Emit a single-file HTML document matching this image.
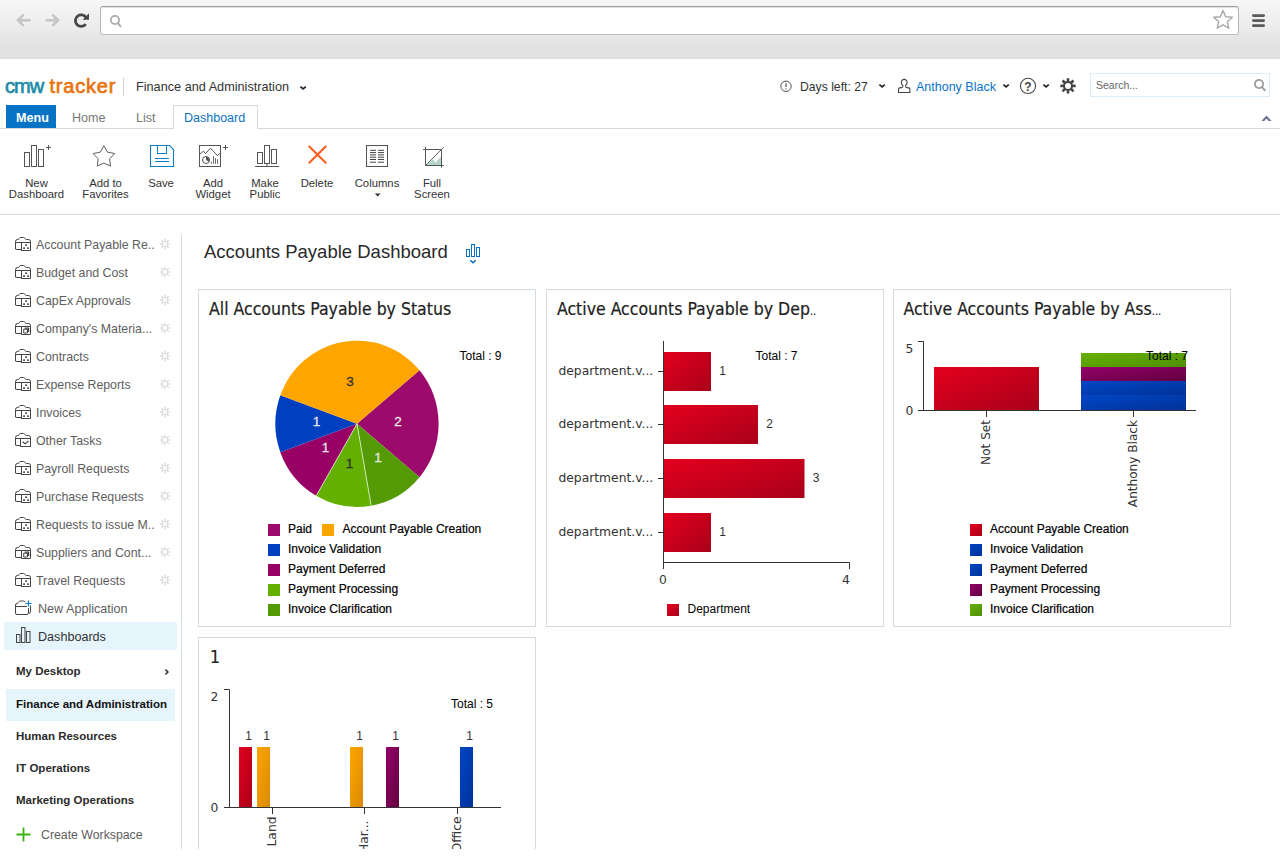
<!DOCTYPE html>
<html lang="en"><head><meta charset="utf-8"><title>Accounts Payable Dashboard</title>
<style>
*{box-sizing:border-box;margin:0;padding:0}
html,body{width:1280px;height:859px;background:#fff;overflow:hidden}
body{font-family:"Liberation Sans",sans-serif;color:#333;position:relative}
#page{position:absolute;left:0;top:0;width:1280px;height:849px;overflow:hidden;background:#fff}
.abs{position:absolute}
.t{position:absolute;white-space:nowrap;line-height:1}
svg{position:absolute;overflow:visible}
#chrome{position:absolute;left:0;top:0;width:1280px;height:59px;background:linear-gradient(#f7f7f7 0,#f1f1f1 14px,#ebebeb 30px,#e2e2e2 44px,#e2e2e2 57px,#dcdcdc 59px)}
#url{position:absolute;left:100px;top:6px;width:1139px;height:29px;background:#fff;border:1px solid;border-color:#a0a0a0 #b6b6b6 #bdbdbd #b6b6b6;border-radius:3px;box-shadow:inset 0 1px 1px rgba(0,0,0,.12)}
.hl{position:absolute;background:#d3dbe2;height:1px}
.tb{position:absolute;top:178px;font-size:11.3px;line-height:11px;text-align:center;color:#333;white-space:nowrap;transform:translateX(-50%)}
.sb{position:absolute;left:36px;font-size:12.35px;color:#5e5e5e;white-space:nowrap;line-height:16px}
.sbb{position:absolute;left:16px;font-size:11.5px;font-weight:bold;color:#2b2b2b;white-space:nowrap;line-height:16px}
.w{position:absolute;width:338px;height:338px;border:1px solid #d3dae0;background:#fff}
.wt{position:absolute;left:10px;top:7.5px;-webkit-text-stroke:.2px #222;font-family:"DejaVu Sans Condensed","DejaVu Sans","Liberation Sans",sans-serif;font-size:17.5px;line-height:22px;color:#222;white-space:nowrap}
.lg{position:absolute;font-size:12px;line-height:14px;color:#000;white-space:nowrap;-webkit-text-stroke:.2px #000}
.sw{position:absolute;width:12px;height:12px}
</style></head>
<body><div id="page">
<div id="chrome"><svg width="100" height="59" style="left:0;top:0" viewBox="0 0 100 59"><g stroke="#fafafa" stroke-width="5" fill="none" stroke-linecap="round" stroke-linejoin="round" opacity=".7"><path d="M29.500 20.300H19M23 15.300L17.700 20.300L23 25.300"/><path d="M46.500 20.300H57M53 15.300L58.300 20.300L53 25.300"/></g><g stroke="#c7c7c7" stroke-width="2.900" fill="none" stroke-linecap="round" stroke-linejoin="round"><path d="M29.500 20.300H19M23 15.300L17.700 20.300L23 25.300"/><path d="M46.500 20.300H57M53 15.300L58.300 20.300L53 25.300"/></g><g><path d="M86.220 17.700A5.800 5.800 0 1 0 85.770 24.170" stroke="#474747" stroke-width="2.800" fill="none"/><path d="M89 13.200V19.700H82.600z" fill="#474747"/></g></svg><div id="url"></div><svg width="20" height="20" style="left:108px;top:12px" viewBox="0 0 20 20"><circle cx="7" cy="8" r="4.100" fill="none" stroke="#ababab" stroke-width="1.800"/><path d="M10 11.100L12.400 14.200" stroke="#ababab" stroke-width="2" stroke-linecap="round"/></svg><svg width="24" height="24" style="left:1211px;top:8px" viewBox="0 0 24 24"><path d="M12 2.6l2.7 6.1 6.6.6-5 4.4 1.5 6.5L12 16.8l-5.8 3.4 1.5-6.5-5-4.4 6.6-.6z" fill="#fff" stroke="#a9a9a9" stroke-width="1.400" stroke-linejoin="round"/></svg><svg width="16" height="16" style="left:1251px;top:13px" viewBox="0 0 16 16"><g stroke="#5a5a5a" stroke-width="2.6" stroke-linecap="round"><path d="M2.3 2.6h10.4M2.3 7.6h10.4M2.3 12.6h10.4"/></g></svg></div>
<div class="t" style="left:5px;top:73.5px;font-size:20px;letter-spacing:-1px;color:#1b8aa6;line-height:24px;-webkit-text-stroke:.65px #1b8aa6">cmw</div><div class="t" style="left:49.5px;top:73.5px;font-size:20px;letter-spacing:.8px;color:#e8720c;line-height:24px;-webkit-text-stroke:.65px #e8720c">tracker</div><div class="abs" style="left:123px;top:78px;width:1px;height:18px;background:#d0d0d0"></div><div class="t" style="left:136px;top:79px;font-size:12.7px;line-height:16px;color:#333">Finance and Administration</div><svg width="8" height="6" style="left:298.8px;top:84.9px" viewBox="0 0 8 6"><path d="M1.400 1.700L4.100 3.900L6.800 1.700" fill="none" stroke="#222" stroke-width="1.700"/></svg><svg width="14" height="14" style="left:779px;top:79px" viewBox="0 0 14 14"><circle cx="7" cy="7.3" r="5.2" fill="none" stroke="#555" stroke-width="1"/><path d="M7 4.3v3.6" stroke="#555" stroke-width="1.2"/><circle cx="7" cy="9.9" r=".7" fill="#555"/></svg><div class="t" style="left:800px;top:79px;font-size:12.2px;line-height:16px;color:#333">Days left: 27</div><svg width="8" height="6" style="left:877.9px;top:82.8px" viewBox="0 0 8 6"><path d="M1.400 1.700L4.100 3.900L6.800 1.700" fill="none" stroke="#222" stroke-width="1.700"/></svg><svg width="16" height="16" style="left:896px;top:78px" viewBox="0 0 16 16"><path d="M8.200 1.400C6.400 1.400 5.300 2.700 5.300 4.400C5.300 5.600 5.900 6.600 6.800 7.400V8.600C6.800 9.200 6.300 9.500 5.600 9.600L3.600 9.900C2.900 10 2.500 10.500 2.500 11.200V14.500H13.900V11.200C13.900 10.500 13.500 10 12.800 9.900L10.800 9.600C10.100 9.500 9.600 9.200 9.600 8.600V7.400C10.500 6.600 11.100 5.600 11.100 4.400C11.100 2.700 10 1.400 8.200 1.400Z" fill="none" stroke="#444" stroke-width="1.100"/></svg><div class="t" style="left:916px;top:79px;font-size:12.5px;line-height:16px;color:#0a72c4">Anthony Black</div><svg width="8" height="6" style="left:1001.9px;top:82.8px" viewBox="0 0 8 6"><path d="M1.400 1.700L4.100 3.900L6.800 1.700" fill="none" stroke="#222" stroke-width="1.700"/></svg><svg width="20" height="20" style="left:1018px;top:76px" viewBox="0 0 20 20"><circle cx="10" cy="9.900" r="7.600" fill="none" stroke="#4a4a4a" stroke-width="1.100"/></svg><div class="t" style="left:1018px;top:79.500px;width:20px;text-align:center;font-size:12px;font-weight:bold;line-height:14px;color:#444">?</div><svg width="8" height="6" style="left:1041.9px;top:82.8px" viewBox="0 0 8 6"><path d="M1.400 1.700L4.100 3.900L6.800 1.700" fill="none" stroke="#222" stroke-width="1.700"/></svg><svg width="18" height="18" style="left:1059px;top:77px" viewBox="0 0 18 18"><circle cx="9" cy="8.9" r="4.0" fill="none" stroke="#444" stroke-width="2.0"/><line x1="13.30" y1="8.90" x2="16.70" y2="8.90" stroke="#444" stroke-width="2.6"/><line x1="12.04" y1="11.94" x2="14.44" y2="14.34" stroke="#444" stroke-width="2.6"/><line x1="9.00" y1="13.20" x2="9.00" y2="16.60" stroke="#444" stroke-width="2.6"/><line x1="5.96" y1="11.94" x2="3.56" y2="14.34" stroke="#444" stroke-width="2.6"/><line x1="4.70" y1="8.90" x2="1.30" y2="8.90" stroke="#444" stroke-width="2.6"/><line x1="5.96" y1="5.86" x2="3.56" y2="3.46" stroke="#444" stroke-width="2.6"/><line x1="9.00" y1="4.60" x2="9.00" y2="1.20" stroke="#444" stroke-width="2.6"/><line x1="12.04" y1="5.86" x2="14.44" y2="3.46" stroke="#444" stroke-width="2.6"/></svg><div class="abs" style="left:1090px;top:73px;width:180px;height:24px;border:1px solid #dcecf9;background:#fff"></div><div class="t" style="left:1096px;top:79px;font-size:10.5px;line-height:13px;color:#666">Search...</div><svg width="14" height="14" style="left:1253px;top:78px" viewBox="0 0 14 14"><circle cx="6" cy="6" r="4.100" fill="none" stroke="#9c9c9c" stroke-width="1.800"/><path d="M9 9.100L11.700 12.200" stroke="#9c9c9c" stroke-width="2" stroke-linecap="round"/></svg><div class="hl" style="left:0;top:128px;width:1280px"></div><div class="abs" style="left:6px;top:105px;width:50px;height:23px;background:#0673c5"></div><div class="t" style="left:16px;top:110px;font-size:12.6px;font-weight:bold;line-height:16px;color:#fff">Menu</div><div class="t" style="left:72px;top:110px;font-size:12.6px;line-height:16px;color:#777">Home</div><div class="t" style="left:136px;top:110px;font-size:12.6px;line-height:16px;color:#777">List</div><div class="abs" style="left:173px;top:105px;width:85px;height:24px;border:1px solid #d3dbe2;border-bottom:none;background:#fff"></div><div class="t" style="left:184px;top:110px;font-size:12.5px;line-height:16px;color:#0a72c4">Dashboard</div><svg width="12" height="8" style="left:1261px;top:115px" viewBox="0 0 12 8"><path d="M.400 6L5.500 .400L10.600 6H7.700L5.500 3.600L3.300 6Z" fill="#6f7197"/></svg>
<div class="hl" style="left:0;top:214px;width:1280px"></div>
<svg width="32" height="26" style="left:22px;top:143px" viewBox="0 0 32 26"><g fill="none" stroke="#555" stroke-width="1"><rect x="2.5" y="9.5" width="5" height="14"/><rect x="9.5" y="2.5" width="5" height="21"/><rect x="16.5" y="6.500" width="5" height="17"/><path d="M26.500 2v5M24 4.500h5"/></g></svg><div class="tb" style="left:36.5px">New<br>Dashboard</div><svg width="24" height="24" style="left:92px;top:144px" viewBox="0 0 24 24"><path d="M11.90 1.70L15.43 8.15L22.65 9.51L17.61 14.85L18.54 22.14L11.90 19.00L5.26 22.14L6.19 14.85L1.15 9.51L8.37 8.15z" fill="none" stroke="#606060" stroke-width="1" stroke-linejoin="miter"/></svg><div class="tb" style="left:105.5px">Add to<br>Favorites</div><svg width="26" height="24" style="left:149px;top:144px" viewBox="0 0 26 24"><g fill="none" stroke="#0c7fc6" stroke-width="1.100"><path d="M1.500 1.500h19l4 4v17h-23z"/><path d="M8.500 1.500v8h9v-8"/><path d="M6 14.500h14M6 17.500h14"/></g></svg><div class="tb" style="left:161px">Save</div><svg width="32" height="26" style="left:198px;top:143px" viewBox="0 0 32 26"><g fill="none" stroke="#555" stroke-width="1"><rect x="1.500" y="2.500" width="21" height="21"/><path d="M1.500 11.500L5.400 8.200L7.500 10.700L12.500 5.200L19.400 12.600L22.500 9.900" stroke-width="1"/><circle cx="8" cy="17" r="3.500" stroke-width="1"/><path d="M13.400 18.500V20.800M15.500 13.200V20.800M17.500 15.200V20.800M19.500 16.200V20.800" stroke-width=".900"/><path d="M27.500 2v5M25 4.500h5"/></g><path d="M8 17V13.500A3.500 3.500 0 0 1 11.030 18.750z" fill="#555"/></svg><div class="tb" style="left:213px">Add<br>Widget</div><svg width="28" height="26" style="left:253px;top:143px" viewBox="0 0 28 26"><g fill="none" stroke="#555" stroke-width="1"><rect x="4.500" y="9.500" width="5" height="11"/><rect x="11.500" y="2.500" width="5" height="18"/><rect x="18.500" y="6.500" width="5" height="14"/><path d="M14 20.500v3M2 23.500h24"/></g></svg><div class="tb" style="left:265px">Make<br>Public</div><svg width="22" height="22" style="left:307px;top:144px" viewBox="0 0 22 22"><path d="M2.300 2.500L18.700 18.700M18.700 2.500L2.300 18.700" stroke="#ff5a1e" stroke-width="2" stroke-linecap="round"/></svg><div class="tb" style="left:317px">Delete</div><svg width="26" height="26" style="left:365px;top:143px" viewBox="0 0 26 26"><g fill="none" stroke="#555" stroke-width="1"><rect x="1.500" y="2.500" width="21" height="21"/><path d="M5 7.3h6M13 7.3h6M5 9.6h6M13 9.6h6M5 11.9h6M13 11.9h6M5 14.2h6M13 14.2h6M5 16.5h6M13 16.5h6M5 19.2h6M13 19.2h6" stroke="#444"/></g></svg><div class="tb" style="left:377px">Columns</div><svg width="8" height="5" style="left:373.5px;top:192.500px" viewBox="0 0 8 5"><path d="M.800 .500h5.800L3.700 3.400z" fill="#333"/></svg><svg width="26" height="26" style="left:421px;top:144px" viewBox="0 0 26 26"><path d="M5.500 21L11.900 15.200L14.400 18.500L20 12.800V21z" fill="#b5d5cb"/><g fill="none" stroke="#555" stroke-width="1"><path d="M2 5.500H20.500V23.700M4.500 3V21.500H22.800"/><path d="M4.500 21.500L22.800 3.100" stroke-width=".900"/></g></svg><div class="tb" style="left:432px">Full<br>Screen</div>
<div class="abs" style="left:181px;top:235px;width:1px;height:620px;background:#d3dbe2"></div>
<svg width="17" height="15" style="left:15px;top:237px" viewBox="0 0 17 15"><g fill="none" stroke="#444" stroke-width="1" stroke-linejoin="round"><path d="M.5 12.300V4.600Q.5 2.700 2.400 2.500L3.300 2.500Q4 2.500 4.200 1.700Q4.500 .5 5.500 .5H8.600Q9.600 .5 10 1.500Q10.400 2.500 11.300 2.500H13.600Q15.500 2.500 15.500 4.500V13.500H6.5V12.500H2Q.5 12.500 .5 11.500" /><path d="M.5 5.500H15.500M6.5 5.500V13.500"/></g><g fill="#444"><rect x="10.200" y="7.300" width="1.700" height="1.700"/><rect x="8.200" y="10.300" width="1.700" height="1.700"/><rect x="12.200" y="10.300" width="1.700" height="1.700"/></g></svg><div class="sb" style="top:237px">Account Payable Re..</div><svg width="12" height="12" style="left:159px;top:238px" viewBox="0 0 12 12"><circle cx="6" cy="6" r="2.7" fill="none" stroke="#dadada" stroke-width="1.1"/><line x1="9.20" y1="6.00" x2="11.20" y2="6.00" stroke="#dadada" stroke-width="1.5"/><line x1="8.26" y1="8.26" x2="9.68" y2="9.68" stroke="#dadada" stroke-width="1.5"/><line x1="6.00" y1="9.20" x2="6.00" y2="11.20" stroke="#dadada" stroke-width="1.5"/><line x1="3.74" y1="8.26" x2="2.32" y2="9.68" stroke="#dadada" stroke-width="1.5"/><line x1="2.80" y1="6.00" x2="0.80" y2="6.00" stroke="#dadada" stroke-width="1.5"/><line x1="3.74" y1="3.74" x2="2.32" y2="2.32" stroke="#dadada" stroke-width="1.5"/><line x1="6.00" y1="2.80" x2="6.00" y2="0.80" stroke="#dadada" stroke-width="1.5"/><line x1="8.26" y1="3.74" x2="9.68" y2="2.32" stroke="#dadada" stroke-width="1.5"/></svg>
<svg width="17" height="15" style="left:15px;top:265px" viewBox="0 0 17 15"><g fill="none" stroke="#444" stroke-width="1" stroke-linejoin="round"><path d="M.5 12.300V4.600Q.5 2.700 2.400 2.500L3.300 2.500Q4 2.500 4.200 1.700Q4.500 .5 5.500 .5H8.600Q9.600 .5 10 1.500Q10.400 2.500 11.300 2.500H13.600Q15.500 2.500 15.500 4.500V13.500H6.5V12.500H2Q.5 12.500 .5 11.500" /><path d="M.5 5.500H15.500M6.5 5.500V13.500"/></g><g fill="#444"><rect x="10.200" y="7.300" width="1.700" height="1.700"/><rect x="8.200" y="10.300" width="1.700" height="1.700"/><rect x="12.200" y="10.300" width="1.700" height="1.700"/></g></svg><div class="sb" style="top:265px">Budget and Cost</div><svg width="12" height="12" style="left:159px;top:266px" viewBox="0 0 12 12"><circle cx="6" cy="6" r="2.7" fill="none" stroke="#dadada" stroke-width="1.1"/><line x1="9.20" y1="6.00" x2="11.20" y2="6.00" stroke="#dadada" stroke-width="1.5"/><line x1="8.26" y1="8.26" x2="9.68" y2="9.68" stroke="#dadada" stroke-width="1.5"/><line x1="6.00" y1="9.20" x2="6.00" y2="11.20" stroke="#dadada" stroke-width="1.5"/><line x1="3.74" y1="8.26" x2="2.32" y2="9.68" stroke="#dadada" stroke-width="1.5"/><line x1="2.80" y1="6.00" x2="0.80" y2="6.00" stroke="#dadada" stroke-width="1.5"/><line x1="3.74" y1="3.74" x2="2.32" y2="2.32" stroke="#dadada" stroke-width="1.5"/><line x1="6.00" y1="2.80" x2="6.00" y2="0.80" stroke="#dadada" stroke-width="1.5"/><line x1="8.26" y1="3.74" x2="9.68" y2="2.32" stroke="#dadada" stroke-width="1.5"/></svg>
<svg width="17" height="15" style="left:15px;top:293px" viewBox="0 0 17 15"><g fill="none" stroke="#444" stroke-width="1" stroke-linejoin="round"><path d="M.5 12.300V4.600Q.5 2.700 2.400 2.500L3.300 2.500Q4 2.500 4.200 1.700Q4.500 .5 5.500 .5H8.600Q9.600 .5 10 1.500Q10.400 2.500 11.300 2.500H13.600Q15.500 2.500 15.500 4.500V13.500H6.5V12.500H2Q.5 12.500 .5 11.500" /><path d="M.5 5.500H15.500M6.5 5.500V13.500"/></g><g fill="#444"><rect x="10.200" y="7.300" width="1.700" height="1.700"/><rect x="8.200" y="10.300" width="1.700" height="1.700"/><rect x="12.200" y="10.300" width="1.700" height="1.700"/></g></svg><div class="sb" style="top:293px">CapEx Approvals</div><svg width="12" height="12" style="left:159px;top:294px" viewBox="0 0 12 12"><circle cx="6" cy="6" r="2.7" fill="none" stroke="#dadada" stroke-width="1.1"/><line x1="9.20" y1="6.00" x2="11.20" y2="6.00" stroke="#dadada" stroke-width="1.5"/><line x1="8.26" y1="8.26" x2="9.68" y2="9.68" stroke="#dadada" stroke-width="1.5"/><line x1="6.00" y1="9.20" x2="6.00" y2="11.20" stroke="#dadada" stroke-width="1.5"/><line x1="3.74" y1="8.26" x2="2.32" y2="9.68" stroke="#dadada" stroke-width="1.5"/><line x1="2.80" y1="6.00" x2="0.80" y2="6.00" stroke="#dadada" stroke-width="1.5"/><line x1="3.74" y1="3.74" x2="2.32" y2="2.32" stroke="#dadada" stroke-width="1.5"/><line x1="6.00" y1="2.80" x2="6.00" y2="0.80" stroke="#dadada" stroke-width="1.5"/><line x1="8.26" y1="3.74" x2="9.68" y2="2.32" stroke="#dadada" stroke-width="1.5"/></svg>
<svg width="17" height="15" style="left:15px;top:321px" viewBox="0 0 17 15"><g fill="none" stroke="#444" stroke-width="1" stroke-linejoin="round"><path d="M.5 12.300V4.600Q.5 2.700 2.400 2.500L3.300 2.500Q4 2.500 4.200 1.700Q4.500 .5 5.500 .5H8.600Q9.600 .5 10 1.500Q10.400 2.500 11.300 2.500H13.600Q15.500 2.500 15.500 4.500V13.500H6.5V12.500H2Q.5 12.500 .5 11.500" /><path d="M.5 5.500H15.500M6.5 5.500V13.500"/><rect x="8.700" y="8.200" width="3.800" height="3.800"/><path d="M9.700 7.200H13.600V11" stroke-width="1.300"/></g></svg><div class="sb" style="top:321px">Company's Materia...</div><svg width="12" height="12" style="left:159px;top:322px" viewBox="0 0 12 12"><circle cx="6" cy="6" r="2.7" fill="none" stroke="#dadada" stroke-width="1.1"/><line x1="9.20" y1="6.00" x2="11.20" y2="6.00" stroke="#dadada" stroke-width="1.5"/><line x1="8.26" y1="8.26" x2="9.68" y2="9.68" stroke="#dadada" stroke-width="1.5"/><line x1="6.00" y1="9.20" x2="6.00" y2="11.20" stroke="#dadada" stroke-width="1.5"/><line x1="3.74" y1="8.26" x2="2.32" y2="9.68" stroke="#dadada" stroke-width="1.5"/><line x1="2.80" y1="6.00" x2="0.80" y2="6.00" stroke="#dadada" stroke-width="1.5"/><line x1="3.74" y1="3.74" x2="2.32" y2="2.32" stroke="#dadada" stroke-width="1.5"/><line x1="6.00" y1="2.80" x2="6.00" y2="0.80" stroke="#dadada" stroke-width="1.5"/><line x1="8.26" y1="3.74" x2="9.68" y2="2.32" stroke="#dadada" stroke-width="1.5"/></svg>
<svg width="17" height="15" style="left:15px;top:349px" viewBox="0 0 17 15"><g fill="none" stroke="#444" stroke-width="1" stroke-linejoin="round"><path d="M.5 12.300V4.600Q.5 2.700 2.400 2.500L3.300 2.500Q4 2.500 4.200 1.700Q4.500 .5 5.500 .5H8.600Q9.600 .5 10 1.500Q10.400 2.500 11.300 2.500H13.600Q15.500 2.500 15.500 4.500V13.500H6.5V12.500H2Q.5 12.500 .5 11.500" /><path d="M.5 5.500H15.500M6.5 5.500V13.500"/></g><g fill="#444"><rect x="10.200" y="7.300" width="1.700" height="1.700"/><rect x="8.200" y="10.300" width="1.700" height="1.700"/><rect x="12.200" y="10.300" width="1.700" height="1.700"/></g></svg><div class="sb" style="top:349px">Contracts</div><svg width="12" height="12" style="left:159px;top:350px" viewBox="0 0 12 12"><circle cx="6" cy="6" r="2.7" fill="none" stroke="#dadada" stroke-width="1.1"/><line x1="9.20" y1="6.00" x2="11.20" y2="6.00" stroke="#dadada" stroke-width="1.5"/><line x1="8.26" y1="8.26" x2="9.68" y2="9.68" stroke="#dadada" stroke-width="1.5"/><line x1="6.00" y1="9.20" x2="6.00" y2="11.20" stroke="#dadada" stroke-width="1.5"/><line x1="3.74" y1="8.26" x2="2.32" y2="9.68" stroke="#dadada" stroke-width="1.5"/><line x1="2.80" y1="6.00" x2="0.80" y2="6.00" stroke="#dadada" stroke-width="1.5"/><line x1="3.74" y1="3.74" x2="2.32" y2="2.32" stroke="#dadada" stroke-width="1.5"/><line x1="6.00" y1="2.80" x2="6.00" y2="0.80" stroke="#dadada" stroke-width="1.5"/><line x1="8.26" y1="3.74" x2="9.68" y2="2.32" stroke="#dadada" stroke-width="1.5"/></svg>
<svg width="17" height="15" style="left:15px;top:377px" viewBox="0 0 17 15"><g fill="none" stroke="#444" stroke-width="1" stroke-linejoin="round"><path d="M.5 12.300V4.600Q.5 2.700 2.400 2.500L3.300 2.500Q4 2.500 4.200 1.700Q4.500 .5 5.500 .5H8.600Q9.600 .5 10 1.500Q10.400 2.500 11.300 2.500H13.600Q15.500 2.500 15.500 4.500V13.500H6.5V12.500H2Q.5 12.500 .5 11.500" /><path d="M.5 5.500H15.500M6.5 5.500V13.500"/></g><g fill="#444"><rect x="10.200" y="7.300" width="1.700" height="1.700"/><rect x="8.200" y="10.300" width="1.700" height="1.700"/><rect x="12.200" y="10.300" width="1.700" height="1.700"/></g></svg><div class="sb" style="top:377px">Expense Reports</div><svg width="12" height="12" style="left:159px;top:378px" viewBox="0 0 12 12"><circle cx="6" cy="6" r="2.7" fill="none" stroke="#dadada" stroke-width="1.1"/><line x1="9.20" y1="6.00" x2="11.20" y2="6.00" stroke="#dadada" stroke-width="1.5"/><line x1="8.26" y1="8.26" x2="9.68" y2="9.68" stroke="#dadada" stroke-width="1.5"/><line x1="6.00" y1="9.20" x2="6.00" y2="11.20" stroke="#dadada" stroke-width="1.5"/><line x1="3.74" y1="8.26" x2="2.32" y2="9.68" stroke="#dadada" stroke-width="1.5"/><line x1="2.80" y1="6.00" x2="0.80" y2="6.00" stroke="#dadada" stroke-width="1.5"/><line x1="3.74" y1="3.74" x2="2.32" y2="2.32" stroke="#dadada" stroke-width="1.5"/><line x1="6.00" y1="2.80" x2="6.00" y2="0.80" stroke="#dadada" stroke-width="1.5"/><line x1="8.26" y1="3.74" x2="9.68" y2="2.32" stroke="#dadada" stroke-width="1.5"/></svg>
<svg width="17" height="15" style="left:15px;top:405px" viewBox="0 0 17 15"><g fill="none" stroke="#444" stroke-width="1" stroke-linejoin="round"><path d="M.5 12.300V4.600Q.5 2.700 2.400 2.500L3.300 2.500Q4 2.500 4.200 1.700Q4.500 .5 5.500 .5H8.600Q9.600 .5 10 1.500Q10.400 2.500 11.300 2.500H13.600Q15.500 2.500 15.500 4.500V13.500H6.5V12.500H2Q.5 12.500 .5 11.500" /><path d="M.5 5.500H15.500M6.5 5.500V13.500"/></g><g fill="#444"><rect x="10.200" y="7.300" width="1.700" height="1.700"/><rect x="8.200" y="10.300" width="1.700" height="1.700"/><rect x="12.200" y="10.300" width="1.700" height="1.700"/></g></svg><div class="sb" style="top:405px">Invoices</div><svg width="12" height="12" style="left:159px;top:406px" viewBox="0 0 12 12"><circle cx="6" cy="6" r="2.7" fill="none" stroke="#dadada" stroke-width="1.1"/><line x1="9.20" y1="6.00" x2="11.20" y2="6.00" stroke="#dadada" stroke-width="1.5"/><line x1="8.26" y1="8.26" x2="9.68" y2="9.68" stroke="#dadada" stroke-width="1.5"/><line x1="6.00" y1="9.20" x2="6.00" y2="11.20" stroke="#dadada" stroke-width="1.5"/><line x1="3.74" y1="8.26" x2="2.32" y2="9.68" stroke="#dadada" stroke-width="1.5"/><line x1="2.80" y1="6.00" x2="0.80" y2="6.00" stroke="#dadada" stroke-width="1.5"/><line x1="3.74" y1="3.74" x2="2.32" y2="2.32" stroke="#dadada" stroke-width="1.5"/><line x1="6.00" y1="2.80" x2="6.00" y2="0.80" stroke="#dadada" stroke-width="1.5"/><line x1="8.26" y1="3.74" x2="9.68" y2="2.32" stroke="#dadada" stroke-width="1.5"/></svg>
<svg width="17" height="15" style="left:15px;top:433px" viewBox="0 0 17 15"><g fill="none" stroke="#444" stroke-width="1" stroke-linejoin="round"><path d="M.5 12.300V4.600Q.5 2.700 2.400 2.500L3.300 2.500Q4 2.500 4.200 1.700Q4.500 .5 5.500 .5H8.600Q9.600 .5 10 1.500Q10.400 2.500 11.300 2.500H13.600Q15.500 2.500 15.500 4.500V13.500H5.5V12.500H2Q.5 12.500 .5 11.500" /><path d="M.5 5.500H15.500M5.5 5.500V13.500"/><path d="M7.700 8.700L10.200 10.900L13.500 8" stroke-width="1.200"/></g></svg><div class="sb" style="top:433px">Other Tasks</div><svg width="12" height="12" style="left:159px;top:434px" viewBox="0 0 12 12"><circle cx="6" cy="6" r="2.7" fill="none" stroke="#dadada" stroke-width="1.1"/><line x1="9.20" y1="6.00" x2="11.20" y2="6.00" stroke="#dadada" stroke-width="1.5"/><line x1="8.26" y1="8.26" x2="9.68" y2="9.68" stroke="#dadada" stroke-width="1.5"/><line x1="6.00" y1="9.20" x2="6.00" y2="11.20" stroke="#dadada" stroke-width="1.5"/><line x1="3.74" y1="8.26" x2="2.32" y2="9.68" stroke="#dadada" stroke-width="1.5"/><line x1="2.80" y1="6.00" x2="0.80" y2="6.00" stroke="#dadada" stroke-width="1.5"/><line x1="3.74" y1="3.74" x2="2.32" y2="2.32" stroke="#dadada" stroke-width="1.5"/><line x1="6.00" y1="2.80" x2="6.00" y2="0.80" stroke="#dadada" stroke-width="1.5"/><line x1="8.26" y1="3.74" x2="9.68" y2="2.32" stroke="#dadada" stroke-width="1.5"/></svg>
<svg width="17" height="15" style="left:15px;top:461px" viewBox="0 0 17 15"><g fill="none" stroke="#444" stroke-width="1" stroke-linejoin="round"><path d="M.5 12.300V4.600Q.5 2.700 2.400 2.500L3.300 2.500Q4 2.500 4.200 1.700Q4.500 .5 5.500 .5H8.600Q9.600 .5 10 1.500Q10.400 2.500 11.300 2.500H13.600Q15.500 2.500 15.500 4.500V13.500H6.5V12.500H2Q.5 12.500 .5 11.500" /><path d="M.5 5.500H15.500M6.5 5.500V13.500"/></g><g fill="#444"><rect x="10.200" y="7.300" width="1.700" height="1.700"/><rect x="8.200" y="10.300" width="1.700" height="1.700"/><rect x="12.200" y="10.300" width="1.700" height="1.700"/></g></svg><div class="sb" style="top:461px">Payroll Requests</div><svg width="12" height="12" style="left:159px;top:462px" viewBox="0 0 12 12"><circle cx="6" cy="6" r="2.7" fill="none" stroke="#dadada" stroke-width="1.1"/><line x1="9.20" y1="6.00" x2="11.20" y2="6.00" stroke="#dadada" stroke-width="1.5"/><line x1="8.26" y1="8.26" x2="9.68" y2="9.68" stroke="#dadada" stroke-width="1.5"/><line x1="6.00" y1="9.20" x2="6.00" y2="11.20" stroke="#dadada" stroke-width="1.5"/><line x1="3.74" y1="8.26" x2="2.32" y2="9.68" stroke="#dadada" stroke-width="1.5"/><line x1="2.80" y1="6.00" x2="0.80" y2="6.00" stroke="#dadada" stroke-width="1.5"/><line x1="3.74" y1="3.74" x2="2.32" y2="2.32" stroke="#dadada" stroke-width="1.5"/><line x1="6.00" y1="2.80" x2="6.00" y2="0.80" stroke="#dadada" stroke-width="1.5"/><line x1="8.26" y1="3.74" x2="9.68" y2="2.32" stroke="#dadada" stroke-width="1.5"/></svg>
<svg width="17" height="15" style="left:15px;top:489px" viewBox="0 0 17 15"><g fill="none" stroke="#444" stroke-width="1" stroke-linejoin="round"><path d="M.5 12.300V4.600Q.5 2.700 2.400 2.500L3.300 2.500Q4 2.500 4.200 1.700Q4.500 .5 5.500 .5H8.600Q9.600 .5 10 1.500Q10.400 2.500 11.300 2.500H13.600Q15.500 2.500 15.500 4.500V13.500H6.5V12.500H2Q.5 12.500 .5 11.500" /><path d="M.5 5.500H15.500M6.5 5.500V13.500"/></g><g fill="#444"><rect x="10.200" y="7.300" width="1.700" height="1.700"/><rect x="8.200" y="10.300" width="1.700" height="1.700"/><rect x="12.200" y="10.300" width="1.700" height="1.700"/></g></svg><div class="sb" style="top:489px">Purchase Requests</div><svg width="12" height="12" style="left:159px;top:490px" viewBox="0 0 12 12"><circle cx="6" cy="6" r="2.7" fill="none" stroke="#dadada" stroke-width="1.1"/><line x1="9.20" y1="6.00" x2="11.20" y2="6.00" stroke="#dadada" stroke-width="1.5"/><line x1="8.26" y1="8.26" x2="9.68" y2="9.68" stroke="#dadada" stroke-width="1.5"/><line x1="6.00" y1="9.20" x2="6.00" y2="11.20" stroke="#dadada" stroke-width="1.5"/><line x1="3.74" y1="8.26" x2="2.32" y2="9.68" stroke="#dadada" stroke-width="1.5"/><line x1="2.80" y1="6.00" x2="0.80" y2="6.00" stroke="#dadada" stroke-width="1.5"/><line x1="3.74" y1="3.74" x2="2.32" y2="2.32" stroke="#dadada" stroke-width="1.5"/><line x1="6.00" y1="2.80" x2="6.00" y2="0.80" stroke="#dadada" stroke-width="1.5"/><line x1="8.26" y1="3.74" x2="9.68" y2="2.32" stroke="#dadada" stroke-width="1.5"/></svg>
<svg width="17" height="15" style="left:15px;top:517px" viewBox="0 0 17 15"><g fill="none" stroke="#444" stroke-width="1" stroke-linejoin="round"><path d="M.5 12.300V4.600Q.5 2.700 2.400 2.500L3.300 2.500Q4 2.500 4.200 1.700Q4.500 .5 5.500 .5H8.600Q9.600 .5 10 1.500Q10.400 2.500 11.300 2.500H13.600Q15.500 2.500 15.500 4.500V13.500H6.5V12.500H2Q.5 12.500 .5 11.500" /><path d="M.5 5.500H15.500M6.5 5.500V13.500"/></g><g fill="#444"><rect x="10.200" y="7.300" width="1.700" height="1.700"/><rect x="8.200" y="10.300" width="1.700" height="1.700"/><rect x="12.200" y="10.300" width="1.700" height="1.700"/></g></svg><div class="sb" style="top:517px">Requests to issue M..</div><svg width="12" height="12" style="left:159px;top:518px" viewBox="0 0 12 12"><circle cx="6" cy="6" r="2.7" fill="none" stroke="#dadada" stroke-width="1.1"/><line x1="9.20" y1="6.00" x2="11.20" y2="6.00" stroke="#dadada" stroke-width="1.5"/><line x1="8.26" y1="8.26" x2="9.68" y2="9.68" stroke="#dadada" stroke-width="1.5"/><line x1="6.00" y1="9.20" x2="6.00" y2="11.20" stroke="#dadada" stroke-width="1.5"/><line x1="3.74" y1="8.26" x2="2.32" y2="9.68" stroke="#dadada" stroke-width="1.5"/><line x1="2.80" y1="6.00" x2="0.80" y2="6.00" stroke="#dadada" stroke-width="1.5"/><line x1="3.74" y1="3.74" x2="2.32" y2="2.32" stroke="#dadada" stroke-width="1.5"/><line x1="6.00" y1="2.80" x2="6.00" y2="0.80" stroke="#dadada" stroke-width="1.5"/><line x1="8.26" y1="3.74" x2="9.68" y2="2.32" stroke="#dadada" stroke-width="1.5"/></svg>
<svg width="17" height="15" style="left:15px;top:545px" viewBox="0 0 17 15"><g fill="none" stroke="#444" stroke-width="1" stroke-linejoin="round"><path d="M.5 12.300V4.600Q.5 2.700 2.400 2.500L3.300 2.500Q4 2.500 4.200 1.700Q4.500 .5 5.500 .5H8.600Q9.600 .5 10 1.500Q10.400 2.500 11.300 2.500H13.600Q15.500 2.500 15.500 4.500V13.500H6.5V12.500H2Q.5 12.500 .5 11.500" /><path d="M.5 5.500H15.500M6.5 5.500V13.500"/><rect x="8.700" y="8.200" width="3.800" height="3.800"/><path d="M9.700 7.200H13.600V11" stroke-width="1.300"/></g></svg><div class="sb" style="top:545px">Suppliers and Cont...</div><svg width="12" height="12" style="left:159px;top:546px" viewBox="0 0 12 12"><circle cx="6" cy="6" r="2.7" fill="none" stroke="#dadada" stroke-width="1.1"/><line x1="9.20" y1="6.00" x2="11.20" y2="6.00" stroke="#dadada" stroke-width="1.5"/><line x1="8.26" y1="8.26" x2="9.68" y2="9.68" stroke="#dadada" stroke-width="1.5"/><line x1="6.00" y1="9.20" x2="6.00" y2="11.20" stroke="#dadada" stroke-width="1.5"/><line x1="3.74" y1="8.26" x2="2.32" y2="9.68" stroke="#dadada" stroke-width="1.5"/><line x1="2.80" y1="6.00" x2="0.80" y2="6.00" stroke="#dadada" stroke-width="1.5"/><line x1="3.74" y1="3.74" x2="2.32" y2="2.32" stroke="#dadada" stroke-width="1.5"/><line x1="6.00" y1="2.80" x2="6.00" y2="0.80" stroke="#dadada" stroke-width="1.5"/><line x1="8.26" y1="3.74" x2="9.68" y2="2.32" stroke="#dadada" stroke-width="1.5"/></svg>
<svg width="17" height="15" style="left:15px;top:573px" viewBox="0 0 17 15"><g fill="none" stroke="#444" stroke-width="1" stroke-linejoin="round"><path d="M.5 12.300V4.600Q.5 2.700 2.400 2.500L3.300 2.500Q4 2.500 4.200 1.700Q4.500 .5 5.500 .5H8.600Q9.600 .5 10 1.500Q10.400 2.500 11.300 2.500H13.600Q15.500 2.500 15.500 4.500V13.500H6.5V12.500H2Q.5 12.500 .5 11.500" /><path d="M.5 5.500H15.500M6.5 5.500V13.500"/></g><g fill="#444"><rect x="10.200" y="7.300" width="1.700" height="1.700"/><rect x="8.200" y="10.300" width="1.700" height="1.700"/><rect x="12.200" y="10.300" width="1.700" height="1.700"/></g></svg><div class="sb" style="top:573px">Travel Requests</div><svg width="12" height="12" style="left:159px;top:574px" viewBox="0 0 12 12"><circle cx="6" cy="6" r="2.7" fill="none" stroke="#dadada" stroke-width="1.1"/><line x1="9.20" y1="6.00" x2="11.20" y2="6.00" stroke="#dadada" stroke-width="1.5"/><line x1="8.26" y1="8.26" x2="9.68" y2="9.68" stroke="#dadada" stroke-width="1.5"/><line x1="6.00" y1="9.20" x2="6.00" y2="11.20" stroke="#dadada" stroke-width="1.5"/><line x1="3.74" y1="8.26" x2="2.32" y2="9.68" stroke="#dadada" stroke-width="1.5"/><line x1="2.80" y1="6.00" x2="0.80" y2="6.00" stroke="#dadada" stroke-width="1.5"/><line x1="3.74" y1="3.74" x2="2.32" y2="2.32" stroke="#dadada" stroke-width="1.5"/><line x1="6.00" y1="2.80" x2="6.00" y2="0.80" stroke="#dadada" stroke-width="1.5"/><line x1="8.26" y1="3.74" x2="9.68" y2="2.32" stroke="#dadada" stroke-width="1.5"/></svg>
<svg width="18" height="16" style="left:15px;top:600px" viewBox="0 0 18 16"><g fill="none" stroke="#444" stroke-width="1" stroke-linejoin="round"><path d="M.5 13V5Q.5 3.700 2 3.500Q3 3.300 3.300 2.500Q4 1 5.500 1H8.500Q9.800 1 10.300 2.200"/><path d="M.5 6.500H12M13.500 8V13Q13.500 14.500 12 14.500H2Q.5 14.500 .5 13M15.500 5.500V12Q15.500 13 14 13.300"/></g><path d="M13.500 .500v6M10.500 3.500h6" stroke="#0a7ac8" stroke-width="1.200" fill="none"/></svg><div class="sb" style="left:38px;top:601px;font-size:12.6px">New Application</div>
<div class="abs" style="left:4px;top:622px;width:173px;height:28px;background:#e6f4fc"></div><svg width="16" height="18" style="left:15px;top:626px" viewBox="0 0 16 18"><g fill="none" stroke="#444" stroke-width="1"><rect x="1.500" y="8.500" width="3.500" height="8"/><rect x="6.500" y="1.500" width="3.500" height="15"/><rect x="11.500" y="5.500" width="3.500" height="11"/></g></svg><div class="sb" style="left:38px;top:629px;color:#333;font-size:12.6px">Dashboards</div>
<div class="sbb" style="top:663px">My Desktop</div><svg width="6" height="8" style="left:164px;top:668px" viewBox="0 0 6 8"><path d="M1.500 1.400L4 4L1.500 6.600" fill="none" stroke="#222" stroke-width="1.400"/></svg><div class="abs" style="left:6px;top:689px;width:169px;height:32px;background:#e6f4fc"></div><div class="sbb" style="top:696px;color:#111">Finance and Administration</div><div class="sbb" style="top:728px;color:#2b2b2b">Human Resources</div><div class="sbb" style="top:760px;color:#2b2b2b">IT Operations</div><div class="sbb" style="top:792px;color:#2b2b2b">Marketing Operations</div><svg width="16" height="16" style="left:16px;top:827px" viewBox="0 0 16 16"><path d="M7.500 .500v14M.500 7.500h14" stroke="#3ab20e" stroke-width="1.800" fill="none"/></svg><div class="sb" style="left:41px;top:827px;font-size:12.3px">Create Workspace</div>

<div class="t" style="left:204px;top:240px;font-size:18.5px;line-height:24px;color:#2a2a2a">Accounts Payable Dashboard</div><svg width="16" height="22" style="left:465px;top:243px" viewBox="0 0 16 22"><g fill="none" stroke="#0a6fc2" stroke-width="1"><rect x="1.500" y="6.500" width="3" height="7"/><rect x="6.500" y="1.500" width="3" height="12"/><rect x="11.500" y="4.500" width="3" height="9"/></g><path d="M5.300 17.300L8 19.800L10.700 17.300" fill="none" stroke="#0a6fc2" stroke-width="1.500"/></svg>
<div class="w" style="left:198px;top:289px"><div class="wt">All Accounts Payable by Status</div></div>
<div class="w" style="left:546px;top:289px"><div class="wt">Active Accounts Payable by Dep<span style="font-size:11px">..</span></div></div>
<div class="w" style="left:893px;top:289px"><div class="wt" style="left:9.5px">Active Accounts Payable by Ass<span style="font-size:11px">...</span></div></div>
<div class="w" style="left:198px;top:637px"><div class="wt" style="left:11px">1</div></div>
<svg width="1280" height="849" style="left:0;top:0" viewBox="0 0 1280 849"><defs>
<linearGradient id="gR" x1="0" y1="0" x2="1" y2="1"><stop offset="0" stop-color="#e4001e"/><stop offset="1" stop-color="#a80019"/></linearGradient>
<linearGradient id="gO" x1="0" y1="0" x2="1" y2="1"><stop offset="0" stop-color="#ffa600"/><stop offset="1" stop-color="#d98a05"/></linearGradient>
<linearGradient id="gP" x1="0" y1="0" x2="1" y2="1"><stop offset="0" stop-color="#93006a"/><stop offset="1" stop-color="#63003f"/></linearGradient>
<linearGradient id="gB" x1="0" y1="0" x2="1" y2="1"><stop offset="0" stop-color="#0046c4"/><stop offset="1" stop-color="#00329a"/></linearGradient>
<linearGradient id="gG" x1="0" y1="0" x2="1" y2="1"><stop offset="0" stop-color="#66b000"/><stop offset="1" stop-color="#4f9006"/></linearGradient>
</defs><g transform="translate(357.0 423.800) scale(.989 1.008) translate(-357.0 -423.5)"><path d="M357.0 423.5L420.20 370.47A82.5 82.5 0 0 1 420.20 476.53Z" fill="#9c0a6c"/><path d="M357.0 423.5L420.20 476.53A82.5 82.5 0 0 1 371.33 504.75Z" fill="#549a05"/><path d="M357.0 423.5L371.33 504.75A82.5 82.5 0 0 1 315.75 494.95Z" fill="#63b000"/><path d="M357.0 423.5L315.75 494.95A82.5 82.5 0 0 1 279.48 451.72Z" fill="#990066"/><path d="M357.0 423.5L279.48 451.72A82.5 82.5 0 0 1 279.48 395.28Z" fill="#0040c0"/><path d="M357.0 423.5L279.48 395.28A82.5 82.5 0 0 1 420.20 370.47Z" fill="#ffa500"/><line x1="357.0" y1="423.5" x2="371.33" y2="504.75" stroke="#e6f0d8" stroke-width=".8"/><line x1="357.0" y1="423.5" x2="315.75" y2="494.95" stroke="#e6f0d8" stroke-width=".8"/></g><text x="350" y="386.4" text-anchor="middle" font-size="13.5" font-family="Liberation Sans, sans-serif" fill="#333" stroke="#333" stroke-width=".3">3</text><text x="398" y="425.9" text-anchor="middle" font-size="13.5" font-family="Liberation Sans, sans-serif" fill="#e6e6e6" stroke="#e6e6e6" stroke-width=".3">2</text><text x="316.5" y="425.9" text-anchor="middle" font-size="13.5" font-family="Liberation Sans, sans-serif" fill="#e6e6e6" stroke="#e6e6e6" stroke-width=".3">1</text><text x="325.5" y="451.9" text-anchor="middle" font-size="13.5" font-family="Liberation Sans, sans-serif" fill="#e6e6e6" stroke="#e6e6e6" stroke-width=".3">1</text><text x="349.5" y="467.9" text-anchor="middle" font-size="13.5" font-family="Liberation Sans, sans-serif" fill="#333" stroke="#333" stroke-width=".3">1</text><text x="378" y="461.9" text-anchor="middle" font-size="13.5" font-family="Liberation Sans, sans-serif" fill="#e6e6e6" stroke="#e6e6e6" stroke-width=".3">1</text><text x="459.500" y="360" font-size="12" font-family="Liberation Sans, sans-serif" fill="#000">Total : 9</text><g stroke="#333" stroke-width="1" fill="none"><path d="M663.500 341V562.500H849.500"/><path d="M663.500 562.500V569M849.500 562.500V569"/><path d="M658 371.5H663.500"/><path d="M658 424.5H663.500"/><path d="M658 478.5H663.500"/><path d="M658 532.5H663.500"/></g><rect x="664" y="352" width="47" height="39" fill="url(#gR)"/><text x="722.5" y="375" text-anchor="middle" font-size="12" font-family="Liberation Sans, sans-serif" fill="#333">1</text><text x="558.500" y="375.2" font-size="12.300" font-family="DejaVu Sans, Liberation Sans, sans-serif" fill="#333">department.v...</text><rect x="664" y="405" width="94" height="39" fill="url(#gR)"/><text x="769.5" y="428" text-anchor="middle" font-size="12" font-family="Liberation Sans, sans-serif" fill="#333">2</text><text x="558.500" y="428.2" font-size="12.300" font-family="DejaVu Sans, Liberation Sans, sans-serif" fill="#333">department.v...</text><rect x="664" y="459" width="140.5" height="39" fill="url(#gR)"/><text x="816.0" y="482" text-anchor="middle" font-size="12" font-family="Liberation Sans, sans-serif" fill="#333">3</text><text x="558.500" y="482.2" font-size="12.300" font-family="DejaVu Sans, Liberation Sans, sans-serif" fill="#333">department.v...</text><rect x="664" y="513" width="47" height="39" fill="url(#gR)"/><text x="722.5" y="536" text-anchor="middle" font-size="12" font-family="Liberation Sans, sans-serif" fill="#333">1</text><text x="558.500" y="536.2" font-size="12.300" font-family="DejaVu Sans, Liberation Sans, sans-serif" fill="#333">department.v...</text><text x="663" y="583.700" text-anchor="middle" font-size="12.300" font-family="DejaVu Sans, Liberation Sans, sans-serif" fill="#333">0</text><text x="846" y="583.700" text-anchor="middle" font-size="12.300" font-family="DejaVu Sans, Liberation Sans, sans-serif" fill="#333">4</text><text x="755.500" y="360" font-size="12" font-family="Liberation Sans, sans-serif" fill="#000">Total : 7</text><rect x="667" y="604" width="12" height="12" fill="url(#gR)"/><text x="687.500" y="613.300" font-size="12" font-family="Liberation Sans, sans-serif" fill="#000">Department</text><g stroke="#333" stroke-width="1" fill="none"><path d="M918 341.500H923.500V410.500"/><path d="M918 410.500H1196"/><path d="M986.500 410.500V417M1133.500 410.500V417"/></g><rect x="934" y="367" width="105" height="43" fill="url(#gR)"/><rect x="1081" y="353" width="105" height="14" fill="url(#gG)"/><rect x="1081" y="367" width="105" height="14" fill="url(#gP)"/><rect x="1081" y="381" width="105" height="14" fill="url(#gB)"/><rect x="1081" y="395" width="105" height="15" fill="url(#gB)"/><text x="909.500" y="353" text-anchor="middle" font-size="12.300" font-family="DejaVu Sans, Liberation Sans, sans-serif" fill="#333">5</text><text x="909.500" y="414.500" text-anchor="middle" font-size="12.300" font-family="DejaVu Sans, Liberation Sans, sans-serif" fill="#333">0</text><text transform="translate(990 420) rotate(-90)" text-anchor="end" font-size="12.100" font-family="DejaVu Sans, Liberation Sans, sans-serif" fill="#333">Not Set</text><text transform="translate(1137 420) rotate(-90)" text-anchor="end" font-size="12.100" font-family="DejaVu Sans, Liberation Sans, sans-serif" fill="#333">Anthony Black</text><text x="1146" y="360" font-size="12" font-family="Liberation Sans, sans-serif" fill="#000">Total : 7</text><g stroke="#333" stroke-width="1" fill="none"><path d="M224 689.500H229.500V807.500"/><path d="M224 807.500H501"/><path d="M272.500 807.500V814M364.500 807.500V814M457.500 807.500V814"/></g><rect x="239" y="747" width="13" height="60" fill="url(#gR)"/><text x="248.5" y="739.700" text-anchor="middle" font-size="12" font-family="Liberation Sans, sans-serif" fill="#333">1</text><rect x="257" y="747" width="13" height="60" fill="url(#gO)"/><text x="266.5" y="739.700" text-anchor="middle" font-size="12" font-family="Liberation Sans, sans-serif" fill="#333">1</text><rect x="350" y="747" width="13" height="60" fill="url(#gO)"/><text x="359.5" y="739.700" text-anchor="middle" font-size="12" font-family="Liberation Sans, sans-serif" fill="#333">1</text><rect x="386" y="747" width="13" height="60" fill="url(#gP)"/><text x="395.5" y="739.700" text-anchor="middle" font-size="12" font-family="Liberation Sans, sans-serif" fill="#333">1</text><rect x="460" y="747" width="13" height="60" fill="url(#gB)"/><text x="469.5" y="739.700" text-anchor="middle" font-size="12" font-family="Liberation Sans, sans-serif" fill="#333">1</text><text x="214.500" y="701" text-anchor="middle" font-size="12.300" font-family="DejaVu Sans, Liberation Sans, sans-serif" fill="#333">2</text><text x="214.500" y="811.500" text-anchor="middle" font-size="12.300" font-family="DejaVu Sans, Liberation Sans, sans-serif" fill="#333">0</text><text x="451" y="708" font-size="12" font-family="Liberation Sans, sans-serif" fill="#000">Total : 5</text><text transform="translate(276 816.500) rotate(-90)" text-anchor="end" font-size="12.300" font-family="DejaVu Sans, Liberation Sans, sans-serif" fill="#333">Land</text><text transform="translate(368 820.500) rotate(-90)" text-anchor="end" font-size="12.300" font-family="DejaVu Sans, Liberation Sans, sans-serif" fill="#333">Har...</text><text transform="translate(461 816.500) rotate(-90)" text-anchor="end" font-size="12.300" font-family="DejaVu Sans, Liberation Sans, sans-serif" fill="#333">Office</text></svg>
<div class="sw" style="left:268px;top:524px;background:#9c0a6c"></div><div class="lg" style="left:288px;top:522px">Paid</div><div class="sw" style="left:268px;top:544px;background:#0040c0"></div><div class="lg" style="left:288px;top:542px">Invoice Validation</div><div class="sw" style="left:268px;top:564px;background:#990066"></div><div class="lg" style="left:288px;top:562px">Payment Deferred</div><div class="sw" style="left:268px;top:584px;background:#63b000"></div><div class="lg" style="left:288px;top:582px">Payment Processing</div><div class="sw" style="left:268px;top:604px;background:#549a05"></div><div class="lg" style="left:288px;top:602px">Invoice Clarification</div><div class="sw" style="left:322px;top:524px;background:#ffa500"></div><div class="lg" style="left:342.500px;top:522px">Account Payable Creation</div>
<div class="sw" style="left:970px;top:524px;background:linear-gradient(135deg,#e4001e,#a80019)"></div><div class="lg" style="left:990px;top:522px">Account Payable Creation</div><div class="sw" style="left:970px;top:544px;background:linear-gradient(135deg,#0046c4,#00329a)"></div><div class="lg" style="left:990px;top:542px">Invoice Validation</div><div class="sw" style="left:970px;top:564px;background:linear-gradient(135deg,#0046c4,#00329a)"></div><div class="lg" style="left:990px;top:562px">Payment Deferred</div><div class="sw" style="left:970px;top:584px;background:linear-gradient(135deg,#93006a,#63003f)"></div><div class="lg" style="left:990px;top:582px">Payment Processing</div><div class="sw" style="left:970px;top:604px;background:linear-gradient(135deg,#66b000,#4f9006)"></div><div class="lg" style="left:990px;top:602px">Invoice Clarification</div></div></body></html>
